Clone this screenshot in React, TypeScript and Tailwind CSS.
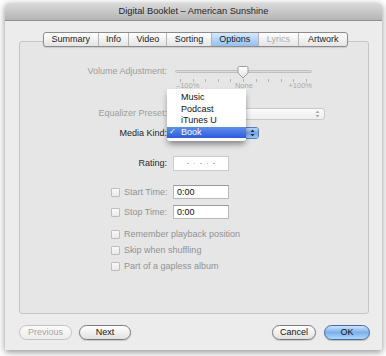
import React from 'react';

const tabs = [
  { label: 'Summary', w: 'w-[54px]' },
  { label: 'Info', w: 'w-[31px]' },
  { label: 'Video', w: 'w-[38px]' },
  { label: 'Sorting', w: 'w-[45px]' },
  { label: 'Options', w: 'w-[47px]', selected: true },
  { label: 'Lyrics', w: 'w-[41px]', disabled: true },
  { label: 'Artwork', w: 'w-[49px]' },
];

const Arrows = ({ color }: { color: string }) => (
  <svg width="5" height="8" viewBox="0 0 5 8">
    <path d="M2.5 0.5 L4.5 3 H0.5 Z" fill={color} />
    <path d="M2.5 7.5 L4.5 5 H0.5 Z" fill={color} />
  </svg>
);

const Checkbox = () => (
  <div className="h-[9px] w-[9px] shrink-0 rounded-[1px] border border-[#bdbdbd] bg-gradient-to-b from-[#fafafa] to-[#e9e9e9]" />
);

const Thumb = () => (
  <svg width="12" height="13" viewBox="0 0 12 13">
    <defs>
      <linearGradient id="th" x1="0" y1="0" x2="0" y2="1">
        <stop offset="0" stopColor="#ffffff" />
        <stop offset="1" stopColor="#e2e2e2" />
      </linearGradient>
    </defs>
    <path
      d="M1 1.8 Q1 0.5 2.3 0.5 H9.7 Q11 0.5 11 1.8 V7 L6 12 L1 7 Z"
      fill="url(#th)"
      stroke="#9c9c9c"
    />
  </svg>
);

const App = () => {
  return (
    <div className="h-[356px] w-[386px] bg-white pl-[5px] pt-[3px] [font-family:'Liberation_Sans',Arial,sans-serif] text-[9px] leading-none">
      <div className="flex h-[347px] w-[377px] flex-col rounded-t-[4px] shadow-[0_2px_7px_rgba(0,0,0,0.45)]">
        {/* title bar */}
        <div className="flex h-[18px] items-center justify-center rounded-t-[4px] border-b border-[#8e8e8e] bg-gradient-to-b from-[#dadada] to-[#b5b5b5] text-[9.3px] text-[#262626]">
          Digital Booklet – American Sunshine
        </div>

        <div className="flex flex-1 flex-col bg-[#ececec] pl-[14px] pr-[13px] pt-[11px]">
          {/* tabs */}
          <div className="relative z-10 ml-[24px] flex h-[15px] w-[305px] overflow-hidden rounded-[3px] border border-[#8c8c8c] bg-gradient-to-b from-[#ffffff] to-[#e4e4e4] shadow-[0_1px_1px_rgba(0,0,0,0.12)]">
            {tabs.map((t, i) => (
              <div
                key={t.label}
                className={`flex items-center justify-center ${t.w} ${
                  i > 0 ? 'border-l border-[#b4b4b4]' : ''
                } ${
                  t.selected
                    ? 'bg-gradient-to-b from-[#d6e9fc] to-[#94c0ee] text-[#0d1a2a]'
                    : t.disabled
                      ? 'text-[#ababab]'
                      : 'text-[#1a1a1a]'
                }`}>
                {t.label}
              </div>
            ))}
          </div>

          {/* group box */}
          <div className="relative -mt-[6px] flex h-[273px] flex-col rounded-[3px] border border-[#c6c6c6] bg-[#e6e6e6] pt-[22px]">
            {/* volume */}
            <div className="flex items-start">
              <div className="flex h-[14px] w-[147px] items-center justify-end text-[#9d9d9d]">
                Volume Adjustment:
              </div>
              <div className="ml-[7px] flex w-[139px] flex-col">
                <div className="relative flex h-[14px] items-center">
                  <div className="ml-[1px] h-[3px] w-[137px] rounded-full border border-[#bfbfbf] bg-[#dadada]" />
                  <div className="absolute left-[63px] top-[2px]">
                    <Thumb />
                  </div>
                </div>
                <div className="mt-[1px] flex h-[3px] justify-between px-[6px]">
                  {Array.from({ length: 11 }).map((_, i) => (
                    <div key={i} className="h-[3px] w-px bg-[#b3b3b3]" />
                  ))}
                </div>
                <div className="flex h-[7px] items-center justify-between pl-[2px] pr-[1px] text-[7.5px] text-[#a9a9a9]">
                  <span>–100%</span>
                  <span>None</span>
                  <span>+100%</span>
                </div>
              </div>
            </div>

            {/* equalizer */}
            <div className="mt-[18px] flex h-[13px] items-center">
              <div className="w-[147px] text-right text-[#9d9d9d]">Equalizer Preset:</div>
              <div className="ml-[7px] flex h-[12px] w-[151px] items-center justify-end rounded-[3px] border border-[#c9c9c9] bg-gradient-to-b from-[#fbfbfb] to-[#eeeeee] pr-[4px]">
                <Arrows color="#a8a8a8" />
              </div>
            </div>

            {/* media kind */}
            <div className="mt-[7px] flex h-[12px] items-center">
              <div className="w-[147px] text-right text-[#1e1e1e]">Media Kind:</div>
              <div className="ml-[7px] flex h-[12px] w-[85px] overflow-hidden rounded-[3px] border border-[#5b7eae]">
                <div className="flex flex-1 items-center bg-white pl-[6px] text-[#111]">Book</div>
                <div className="flex w-[12px] items-center justify-center bg-gradient-to-b from-[#b7d6f6] via-[#6ea5e6] to-[#9ccbf4]">
                  <Arrows color="#1b2c48" />
                </div>
              </div>
            </div>

            {/* rating */}
            <div className="mt-[17px] flex h-[15px] items-center">
              <div className="w-[147px] text-right text-[#2a2a2a]">Rating:</div>
              <div className="ml-[6px] flex h-[15px] w-[56px] items-center justify-center gap-[5px] border border-[#cbcbcb] bg-white">
                {[0, 1, 2, 3, 4].map(i => (
                  <div key={i} className="h-[1.5px] w-[1.5px] rounded-full bg-[#b0b0b0]" />
                ))}
              </div>
            </div>

            {/* start time */}
            <div className="mt-[14px] flex h-[14px] items-center">
              <div className="flex w-[147px] items-center gap-[4px] whitespace-nowrap pl-[91px] text-[#929292]">
                <Checkbox />
                <span>Start Time:</span>
              </div>
              <div className="ml-[6px] flex h-[14px] w-[56px] items-center border border-[#b9b9b9] border-t-[#9a9a9a] bg-white pl-[3px] text-[#111]">
                0:00
              </div>
            </div>

            {/* stop time */}
            <div className="mt-[6px] flex h-[14px] items-center">
              <div className="flex w-[147px] items-center gap-[4px] whitespace-nowrap pl-[91px] text-[#929292]">
                <Checkbox />
                <span>Stop Time:</span>
              </div>
              <div className="ml-[6px] flex h-[14px] w-[56px] items-center border border-[#b9b9b9] border-t-[#9a9a9a] bg-white pl-[3px] text-[#111]">
                0:00
              </div>
            </div>

            {/* checkboxes */}
            <div className="mt-[9px] flex flex-col gap-[4px] pl-[91px] text-[#929292]">
              {['Remember playback position', 'Skip when shuffling', 'Part of a gapless album'].map(
                label => (
                  <div key={label} className="flex h-[12px] items-center gap-[4px]">
                    <Checkbox />
                    <span>{label}</span>
                  </div>
                ),
              )}
            </div>

            {/* popup menu */}
            <div className="absolute left-[147px] top-[47px] z-20 w-[79px] rounded-b-[3px] bg-white py-[3px] text-[#111] shadow-[0_4px_6px_-1px_rgba(0,0,0,0.45)]">
              {['Music', 'Podcast', 'iTunes U'].map(item => (
                <div key={item} className="flex h-[11.5px] items-center pl-[14px]">
                  {item}
                </div>
              ))}
              <div className="flex h-[11.5px] items-center bg-gradient-to-b from-[#5f8df0] to-[#2a5cdc] text-white">
                <span className="w-[14px] pl-[2px] [font-family:'DejaVu_Sans',sans-serif] text-[8px]">
                  ✓
                </span>
                <span>Book</span>
              </div>
            </div>
          </div>

          {/* buttons */}
          <div className="mt-[11px] -mr-px flex h-[15px] items-center">
            <div className="flex h-[15px] w-[53px] items-center justify-center rounded-full border border-[#c3c3c3] bg-gradient-to-b from-[#fbfbfb] to-[#ececec] text-[#a6a6a6]">
              Previous
            </div>
            <div className="ml-[7px] flex h-[15px] w-[52px] items-center justify-center rounded-full border border-[#7a7a7a] bg-gradient-to-b from-[#ffffff] to-[#e1e1e1] text-[#111] shadow-[0_1px_1px_rgba(0,0,0,0.15)]">
              Next
            </div>
            <div className="flex-1" />
            <div className="flex h-[15px] w-[44px] items-center justify-center rounded-full border border-[#7a7a7a] bg-gradient-to-b from-[#ffffff] to-[#e1e1e1] text-[#111] shadow-[0_1px_1px_rgba(0,0,0,0.15)]">
              Cancel
            </div>
            <div className="ml-[8px] flex h-[15px] w-[46px] items-center justify-center rounded-full border border-[#43699e] bg-gradient-to-b from-[#cfe4fa] via-[#79b0ec] to-[#b0d8f8] text-[#0c1420] shadow-[0_1px_1px_rgba(0,0,0,0.2)]">
              OK
            </div>
          </div>
        </div>
      </div>
    </div>
  );
};

export default App;
